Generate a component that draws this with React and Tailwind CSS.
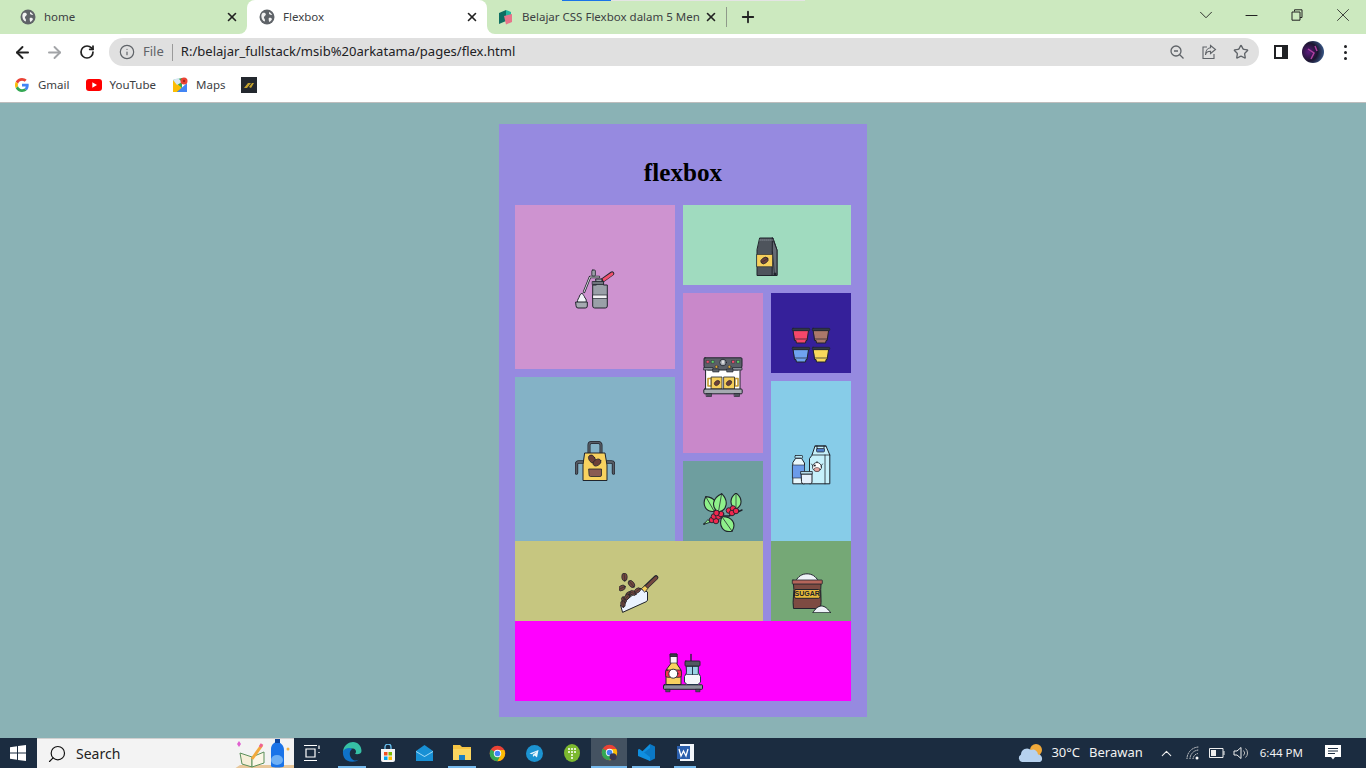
import React from "react";
import { ArrowLeft, ArrowRight, RotateCw, Info, Star, X, Plus, ChevronDown, Minus, ChevronUp, Search } from "lucide-react";

const K = "#20242c";
const Svg = ({ children, size = 40, box = 40 }) => (
  <svg width={size} height={size} viewBox={`0 0 ${box} ${box}`} className="block shrink-0" strokeLinejoin="round" strokeLinecap="round">{children}</svg>
);

const Whipper = () => (
  <Svg>
    <path d="M24 8H15L9 23" fill="none" stroke={K} strokeWidth="2.400" />
    <path d="M24 8H15L9 23" fill="none" stroke="#d5d8dc" strokeWidth="1" />
    <rect x="16.800" y="1" width="3.600" height="6" rx="1" fill="#9aa0a8" stroke={K} strokeWidth=".8" />
    <path d="M28 11L37 4.500" stroke={K} strokeWidth="4.400" />
    <path d="M29 10.500L37 4.800" stroke="#f2506d" strokeWidth="2.800" />
    <path d="M21 10h6v3h1.500v3H32.300v21a2 2 0 0 1-2 2H19.700a2 2 0 0 1-2-2V16h3.300z" fill="#9aa0a8" stroke={K} strokeWidth="1" />
    <rect x="17.600" y="12.500" width="11" height="3" fill="#6f757d" stroke={K} strokeWidth=".8" />
    <rect x="18" y="26" width="14" height="3.500" fill="#f3f3f5" stroke={K} strokeWidth=".7" />
    <path d="M2.500 33.500C2 30 4 29.500 4.500 27 5 25 7 24 7.500 24.500 8 26 9.500 27 10 29 11.500 30 11.500 32 11 33.500z" fill="#f1f4f8" stroke={K} strokeWidth="1" />
    <path d="M1 33h11.300v4a2 2 0 0 1-2 2H3a2 2 0 0 1-2-2z" fill="#a5aab1" stroke={K} strokeWidth="1" />
  </Svg>
);

const Bag = () => (
  <Svg>
    <path d="M13 1H26L30 13V38.500H10V13z" fill="#4e545c" stroke={K} strokeWidth="1" />
    <path d="M25.500 1L30 13V38.500H25.500z" fill="#666c75" stroke={K} strokeWidth="1" />
    <path d="M25.500 15L27.500 38" stroke={K} strokeWidth=".7" fill="none" />
    <path d="M13 3H26" stroke="#8a9099" strokeWidth=".9" strokeDasharray="1 1" />
    <rect x="10" y="17.500" width="15.500" height="12.200" fill="#f6cf5b" stroke={K} strokeWidth=".6" />
    <ellipse cx="17.500" cy="23.500" rx="4" ry="2.800" transform="rotate(-35 17.500 23.500)" fill="#6d4038" stroke={K} strokeWidth=".7" />
    <path d="M14.500 25.500L20.500 21.500" stroke={K} strokeWidth=".5" />
    <circle cx="28" cy="37" r="1.500" fill={K} />
  </Svg>
);

const Machine = () => (
  <Svg>
    <rect x="3" y="12" width="34" height="21" fill="#fff" stroke={K} strokeWidth="1" />
    <path d="M2 .800H38a1 1 0 0 1 1 1V9a4 4 0 0 1-4 4H5a4 4 0 0 1-4-4V1.800a1 1 0 0 1 1-1z" fill="#5b6068" stroke={K} strokeWidth="1" />
    <rect x="3.500" y="3.500" width="2.600" height="2.600" fill="#f2506d" stroke={K} strokeWidth=".4" />
    <rect x="8.500" y="3.500" width="2.600" height="2.600" fill="#5fd068" stroke={K} strokeWidth=".4" />
    <rect x="29" y="3.500" width="2.600" height="2.600" fill="#f2506d" stroke={K} strokeWidth=".4" />
    <rect x="34" y="3.500" width="2.600" height="2.600" fill="#5fd068" stroke={K} strokeWidth=".4" />
    <circle cx="20" cy="5.500" r="3.300" fill="#a7acb3" stroke={K} strokeWidth=".9" />
    <rect x="19.300" y="3.500" width="1.400" height="3" fill="#f2f2f2" />
    <circle cx="13.500" cy="9.800" r="1.500" fill="#e0a93a" stroke={K} strokeWidth=".5" />
    <circle cx="26.500" cy="9.800" r="1.500" fill="#e0a93a" stroke={K} strokeWidth=".5" />
    <rect x="1" y="10.500" width="9" height="2.500" fill="#8a9099" stroke={K} strokeWidth=".7" />
    <rect x="30" y="10.500" width="9" height="2.500" fill="#8a9099" stroke={K} strokeWidth=".7" />
    <rect x="10" y="12" width="6" height="3" fill="#5b6068" stroke={K} strokeWidth=".6" />
    <rect x="24" y="12" width="6" height="3" fill="#5b6068" stroke={K} strokeWidth=".6" />
    <path d="M5 21.500H8.500V29H5z M35 21.500H32V29H35z" fill="none" stroke="#c49a2e" strokeWidth="1.600" />
    <rect x="8.500" y="20" width="10.500" height="12" fill="#f6cf5b" stroke={K} strokeWidth=".8" />
    <rect x="21" y="20" width="10.500" height="12" fill="#f6cf5b" stroke={K} strokeWidth=".8" />
    <ellipse cx="14" cy="26" rx="3" ry="2.200" transform="rotate(-40 14 26)" fill="#6d4038" stroke={K} strokeWidth=".5" />
    <ellipse cx="26" cy="26" rx="3" ry="2.200" transform="rotate(-40 26 26)" fill="#6d4038" stroke={K} strokeWidth=".5" />
    <rect x=".800" y="32" width="38.400" height="4.800" rx="1" fill="#a5aab1" stroke={K} strokeWidth="1" />
    <rect x="3.500" y="36.500" width="5" height="3" fill="#4e545c" stroke={K} strokeWidth=".6" />
    <rect x="31.500" y="36.500" width="5" height="3" fill="#4e545c" stroke={K} strokeWidth=".6" />
  </Svg>
);

const Cup = ({ x, y, c }) => (
  <g transform={`translate(${x} ${y})`}>
    <path d="M1.200 3H16.300L14.800 13H13.800L13.300 15.500H4.200L3.700 13H2.700z" fill={c} stroke={K} strokeWidth="1" />
    <path d="M2.800 11.500H14.800" stroke={K} strokeWidth=".7" />
    <rect x="0" y=".8" width="17.500" height="2.400" rx=".8" fill="#333a44" stroke={K} strokeWidth=".7" />
  </g>
);
const Cups = () => (
  <Svg>
    <Cup x={1.200} y={2.500} c="#f4476a" />
    <Cup x={21.300} y={2.500} c="#a9786a" />
    <Cup x={1.200} y={21.500} c="#6fa3ef" />
    <Cup x={21.300} y={21.500} c="#f8d85c" />
  </Svg>
);

const Milk = () => (
  <Svg>
    <path d="M21 10L24 1H35L38.800 10V38.800H18.500V14z" fill="#c6f0fb" stroke={K} strokeWidth="1" />
    <path d="M34 10V38.800M21 10H38.800" stroke={K} strokeWidth=".8" fill="none" />
    <path d="M24 1H35M26 1V5H33V1" stroke={K} strokeWidth=".9" fill="none" />
    <rect x="25.500" y="3.500" width="8" height="3.500" rx="1" fill="#4e7cc7" stroke={K} strokeWidth=".7" />
    <circle cx="26" cy="22" r="4.500" fill="#fff" stroke={K} strokeWidth=".8" />
    <ellipse cx="26" cy="24.500" rx="3" ry="2" fill="#e8a9a2" stroke={K} strokeWidth=".5" />
    <path d="M20.500 19L22 21M31.500 19L30 21M26 16.500V17.500" stroke={K} strokeWidth=".8" />
    <circle cx="23.800" cy="20.500" r="1" fill={K} />
    <rect x="4" y="10.500" width="7.500" height="2.800" rx=".6" fill="#b8e6f6" stroke={K} strokeWidth=".8" />
    <path d="M5 13.300H10.500L13.500 18V38.800H1.800V18z" fill="#e9f8fd" stroke={K} strokeWidth="1" />
    <rect x="1.800" y="20" width="11.700" height="13" fill="#6b9bea" stroke={K} strokeWidth=".6" />
    <path d="M10.500 29H21V37a1.800 1.800 0 0 1-1.800 1.800H12.300A1.800 1.800 0 0 1 10.500 37z" fill="#e6f0fb" stroke={K} strokeWidth="1" />
    <rect x="10" y="26.500" width="11.300" height="2.500" fill="#b7dbe9" stroke={K} strokeWidth=".8" />
  </Svg>
);

const Apron = () => (
  <Svg>
    <path d="M14 13V4a2.500 2.500 0 0 1 2.500-2.500h7A2.500 2.500 0 0 1 26 4V13" fill="none" stroke={K} strokeWidth="3" />
    <path d="M14 13V4a2.500 2.500 0 0 1 2.500-2.500h7A2.500 2.500 0 0 1 26 4V13" fill="none" stroke="#575d66" strokeWidth="1.500" />
    <path d="M1.500 32V23a2 2 0 0 1 2-2H9M38.500 32V23a2 2 0 0 0-2-2H31" fill="none" stroke={K} strokeWidth="3.400" />
    <path d="M1.500 32V23a2 2 0 0 1 2-2H9M38.500 32V23a2 2 0 0 0-2-2H31" fill="none" stroke="#575d66" strokeWidth="1.800" />
    <path d="M10 12H30L32 24V39.500H8V24z" fill="#f8d25f" stroke={K} strokeWidth="1" />
    <path d="M14 28H26.500V34a1.500 1.500 0 0 1-1.500 1.500H15.500A1.500 1.500 0 0 1 14 34z" fill="#8a5a52" stroke={K} strokeWidth=".8" />
    <ellipse cx="17" cy="18" rx="3" ry="4.300" transform="rotate(-30 17 18)" fill="#6d4038" stroke={K} strokeWidth=".7" />
    <ellipse cx="22" cy="21.500" rx="4.300" ry="3" transform="rotate(-30 22 21.500)" fill="#6d4038" stroke={K} strokeWidth=".7" />
  </Svg>
);

const Leaf = ({ cx, cy, rx, ry, r }) => (
  <g transform={`rotate(${r} ${cx} ${cy})`}>
    <path d={`M${cx} ${cy - ry}C${cx + rx * 1.400} ${cy - ry * .4} ${cx + rx * 1.400} ${cy + ry * .6} ${cx} ${cy + ry}C${cx - rx * 1.400} ${cy + ry * .6} ${cx - rx * 1.400} ${cy - ry * .4} ${cx} ${cy - ry}z`} fill="#8ef08a" stroke={K} strokeWidth="1.100" />
    <path d={`M${cx} ${cy - ry}V${cy + ry}`} stroke={K} strokeWidth=".7" />
  </g>
);
const Berry = ({ x, y }) => <circle cx={x} cy={y} r="2.800" fill="#f0284f" stroke={K} strokeWidth=".9" />;
const Plant = () => (
  <Svg>
    <path d="M1 31L14 23H26L39 17" stroke={K} strokeWidth="1.500" fill="none" />
    <Leaf cx={7} cy={11} rx={5.500} ry={8.500} r={-30} />
    <Leaf cx={17} cy={10} rx={6} ry={9.500} r={10} />
    <Leaf cx={33} cy={8} rx={4.800} ry={8} r={0} />
    <Leaf cx={24} cy={31} rx={6} ry={8.800} r={-35} />
    <path d="M1 31L5 26.500 7 29z" fill="#8ef08a" stroke={K} strokeWidth=".8" />
    <Berry x={9} y={27} /><Berry x={13} y={28} /><Berry x={11} y={23.500} /><Berry x={15.500} y={23.500} /><Berry x={18} y={21} /><Berry x={13.500} y={20} />
    <Berry x={26} y={17.500} /><Berry x={30} y={15.500} /><Berry x={29} y={20} /><Berry x={33} y={18} />
  </Svg>
);

const CBean = ({ x, y, r, a = 3.400, b = 2.200 }) => (
  <g transform={`rotate(${r} ${x} ${y})`}>
    <ellipse cx={x} cy={y} rx={a} ry={b} fill="#74483f" stroke={K} strokeWidth=".7" />
    <path d={`M${x - a} ${y}H${x + a}`} stroke={K} strokeWidth=".5" />
  </g>
);
const Scoop = () => (
  <Svg>
    <path d="M27 14L37 4.500" stroke={K} strokeWidth="4.600" />
    <path d="M28 13.500L37 4.800" stroke="#74483f" strokeWidth="3" />
    <CBean x={5.500} y={4} r={85} a={4} b={2.700} />
    <CBean x={12.500} y={11} r={50} a={4} b={2.600} />
    <CBean x={2.900} y={15} r={-25} a={3.600} b={2.500} />
    <path d="M3.500 39L1.500 32 21.500 15.500 28.500 19V27a2 2 0 0 1-1 1.500z" fill="#eaf3ff" stroke={K} strokeWidth="1" />
    <CBean x={10} y={21} r={-30} /><CBean x={14} y={20} r={20} /><CBean x={18.500} y={17.500} r={-35} />
    <CBean x={5} y={27} r={70} /><CBean x={8} y={24} r={-50} /><CBean x={4} y={31} r={80} />
    <path d="M22.500 15.500L26 12.500 28.800 15.500 26 19z" fill="#f6cf5b" stroke={K} strokeWidth=".8" />
  </Svg>
);

const Sugar = () => (
  <Svg>
    <path d="M5 7.500C7 3.500 11 .8 16 .8S25 3.500 27 7.500z" fill="#eef2f8" stroke={K} strokeWidth="1" />
    <path d="M2.500 11C4 18 1 28 2.500 35.500H29.500C31 28 29 18 30 11z" fill="#7d4b42" stroke={K} strokeWidth="1" />
    <rect x="1.300" y="7" width="30" height="4" rx=".6" fill="#b5655a" stroke={K} strokeWidth=".8" />
    <rect x="3.500" y="16.500" width="25.500" height="8.800" rx="1.500" fill="#e8b93a" stroke={K} strokeWidth="1" />
    <text x="16.200" y="23.300" textAnchor="middle" fontFamily="Liberation Sans, sans-serif" fontWeight="700" fontSize="7" fill={K}>SUGAR</text>
    <path d="M22 39.500C24 36 27 33 30.500 33S37 36 39.500 39.500z" fill="#eef2f8" stroke={K} strokeWidth="1" />
  </Svg>
);

const Bottles = () => (
  <Svg>
    <rect x=".5" y="31.800" width="39" height="4.500" rx=".8" fill="#8a9099" stroke={K} strokeWidth="1" />
    <rect x="3" y="36.300" width="4" height="2.500" fill="#4e545c" stroke={K} strokeWidth=".6" />
    <rect x="33" y="36.300" width="4" height="2.500" fill="#4e545c" stroke={K} strokeWidth=".6" />
    <path d="M7.500 1H14V11L18 17V31.500H3V17L7.500 11z" fill="#f8d25f" stroke={K} strokeWidth="1" />
    <path d="M7.500 3.500H14V10H7.500z" fill="#f7f7f7" stroke={K} strokeWidth=".6" />
    <rect x="7.500" y="1" width="6.500" height="2.500" fill="#3b3f47" stroke={K} strokeWidth=".7" />
    <rect x="2.500" y="17" width="16" height="7.300" rx="2" fill="#f2344f" stroke={K} strokeWidth=".8" />
    <circle cx="10.300" cy="20.700" r="4.500" fill="#fff" stroke={K} strokeWidth=".9" />
    <path d="M28 1.500V8" stroke={K} strokeWidth="1.300" />
    <path d="M23.500 13H35.500V20L37.500 23.500V29L35 31.500H24L21.500 29V23.500L23.500 20z" fill="#f4f7fa" stroke="#213449" strokeWidth="1" />
    <path d="M23.800 13.500H35.200V21.500H23.800z" fill="#9bd3e6" stroke="#213449" strokeWidth=".7" />
    <path d="M29.500 13.500V21.500" stroke="#213449" strokeWidth="1" />
    <rect x="22" y="8" width="15" height="5" rx=".8" fill="#535962" stroke={K} strokeWidth=".9" />
  </Svg>
);

const Cell = ({ className, tall, children }) => (
  <div className={`flex flex-col items-center ${tall ? "pt-16" : "pt-8"} ${className}`}>{children}</div>
);

const Globe = () => (
  <svg width="16" height="16" viewBox="0 0 16 16" className="shrink-0">
    <circle cx="8" cy="8" r="7.500" fill="#5f6368" />
    <path d="M3.500 4C5 3.500 6.300 3.800 6.800 5S5.500 7 5 8 6 10 6 11 5.500 12.500 5.500 12.500 3 11.500 2.500 8.500 2.800 5 3.500 4zM10 3C11.500 3.500 12.500 4.500 13.200 6L11.500 5.800 10 5zM9.800 9C11 8.600 12.500 9 13 10 12.500 11.300 11.500 12.300 10.300 13 9.800 11.800 9.500 10.200 9.800 9z" fill="#f1f1f1" />
  </svg>
);

const Tab = ({ active, icon, title, w, pl }) => (
  <div className={`relative flex items-center h-[34px] pr-2 gap-2 ${pl} ${w} ${active ? "bg-white rounded-t-lg" : ""}`}>
    {active && (
      <div className="absolute -left-2 bottom-0 w-2 h-2 bg-white">
        <div className="w-2 h-2 bg-[#cce9bf] rounded-br-lg" />
      </div>
    )}
    {active && (
      <div className="absolute -right-2 bottom-0 w-2 h-2 bg-white">
        <div className="w-2 h-2 bg-[#cce9bf] rounded-bl-lg" />
      </div>
    )}
    {icon}
    <span className="flex-1 min-w-0 whitespace-nowrap text-[11.500px] text-[#3c4043]">{title}</span>
    <X size={14} strokeWidth={2.800} color="#222" className="shrink-0" />
  </div>
);

const ReadingLogo = () => (
  <svg width="16" height="16" viewBox="0 0 16 16" className="shrink-0">
    <path d="M1 4L8 1V12L1 15z" fill="#0f6e62" />
    <path d="M8 1L13 3V9L8 12z" fill="#27b6a0" />
    <path d="M6 7L14 5V13L8 15.500z" fill="#e8748a" />
  </svg>
);

const GoogleG = () => (
  <svg width="14" height="14" viewBox="0 0 48 48" className="shrink-0">
    <path fill="#EA4335" d="M24 9.500c3.500 0 6.700 1.300 9.100 3.500l6.800-6.800C35.800 2.400 30.300 0 24 0 14.600 0 6.500 5.400 2.600 13.200l7.900 6.100C12.400 13.600 17.700 9.500 24 9.500z" />
    <path fill="#4285F4" d="M47 24.500c0-1.600-.1-3.100-.4-4.500H24v9h12.900c-.6 3-2.200 5.500-4.800 7.200l7.700 6C44.300 38 47 31.800 47 24.500z" />
    <path fill="#FBBC05" d="M10.500 28.700C10 27.200 9.800 25.600 9.800 24s.3-3.200.7-4.700l-7.900-6.100C.9 16.500 0 20.100 0 24s.9 7.500 2.600 10.800z" />
    <path fill="#34A853" d="M24 48c6.500 0 11.900-2.100 15.800-5.800l-7.700-6c-2.100 1.400-4.900 2.300-8.100 2.300-6.300 0-11.600-4.100-13.500-9.800l-7.900 6.100C6.500 42.600 14.600 48 24 48z" />
  </svg>
);

const Chrome = ({ s = 20, dark }) => (
  <svg width={s} height={s} viewBox="0 0 24 24" className="shrink-0">
    <circle cx="12" cy="12" r="11" fill="#ea4335" />
    <path d="M12 12L2.500 6.500A11 11 0 0 0 12 23L17.500 13.500z" fill="#34a853" />
    <path d="M12 7H21.500A11 11 0 0 1 12 23L17 13z" fill="#fbbc05" />
    <circle cx="12" cy="12" r="5.200" fill="#fff" />
    <circle cx="12" cy="12" r="4" fill="#4285f4" />
    {dark && <circle cx="17" cy="18" r="5" fill="#3a3550" />}
  </svg>
);

export default function App() {
  return (
    <div className="relative flex flex-col h-screen overflow-hidden bg-[#8ab2b5]" style={{ fontFamily: '"Noto Sans", sans-serif' }}>
      {/* tab strip */}
      <div className="relative flex items-center h-[34px] bg-[#cce9bf] shrink-0">
        <Tab w="w-[247px]" pl="pl-5" title="home" icon={<Globe />} />
        <Tab active w="w-[240px]" pl="pl-3" title="Flexbox" icon={<Globe />} />
        <Tab w="w-[239px]" pl="pl-[11px]" title="Belajar CSS Flexbox dalam 5 Men" icon={<ReadingLogo />} />
        <div className="w-px h-5 bg-[#8f9a8a]" />
        <Plus size={18} strokeWidth={2.400} color="#222" className="ml-[12px]" />
        <div className="flex-1" />
        <ChevronDown size={22} strokeWidth={1} color="#222" className="mr-[25px] mb-1" />
        <Minus size={19} strokeWidth={1.300} color="#222" className="mr-[30px] mb-1" />
        <svg width="12" height="12" viewBox="0 0 12 12" className="mr-[29px] mb-1">
          <path d="M3.500 2.500V.8H11V8.500H9M1 3H9V11.200H1z" fill="none" stroke="#222" strokeWidth="1" />
        </svg>
        <X size={22} strokeWidth={.9} color="#222" className="mr-3 mb-1" />
        <div className="absolute left-[562px] top-0 w-[49px] h-px bg-[#1a73e8]" />
        <div className="absolute left-[611px] top-0 w-[194px] h-px bg-[#e4e4e4]" />
      </div>

      {/* toolbar */}
      <div className="flex items-center h-9 bg-white shrink-0">
        <ArrowLeft size={19} strokeWidth={2.400} color="#222" className="ml-[13px]" />
        <ArrowRight size={19} strokeWidth={2.400} color="#a2a4a7" className="ml-[13px]" />
        <RotateCw size={16} strokeWidth={2.600} color="#222" className="ml-[15px]" />
        <div className="flex items-center h-7 w-[1150px] ml-[14px] rounded-full bg-[#e0e0e0]">
          <Info size={16} strokeWidth={1.800} color="#5f6368" className="ml-[10px]" />
          <span className="ml-2 text-[13px] text-[#5f6368]">File</span>
          <div className="w-px h-[17px] ml-[8px] bg-[#9a9a9a]" />
          <span className="ml-[8px] text-[13.050px] text-[#202124] whitespace-nowrap">R:/belajar_fullstack/msib%20arkatama/pages/flex.html</span>
          <div className="flex-1" />
          <svg width="16" height="16" viewBox="0 0 16 16" className="mr-[16px]">
            <circle cx="7" cy="7" r="5" fill="none" stroke="#5f6368" strokeWidth="1.300" />
            <path d="M5 7H9M10.500 10.500L14.500 14.500" stroke="#5f6368" strokeWidth="1.300" />
          </svg>
          <svg width="16" height="16" viewBox="0 0 16 16" className="mr-[16px]">
            <path d="M6 3H2V14.500H13V10" fill="none" stroke="#5f6368" strokeWidth="1.100" />
            <path d="M9.500 1.500L14.500 5.500 9.500 9.500V7.300C7 7.300 5 8.500 4.500 11 4.500 7 6.500 4 9.500 3.800z" fill="none" stroke="#5f6368" strokeWidth="1.100" />
          </svg>
          <Star size={16} strokeWidth={2} color="#5f6368" className="mr-[10px]" />
        </div>
        <svg width="14" height="14" viewBox="0 0 14 14" className="ml-[15px]">
          <path d="M0 0H14V14H0z" fill="#202124" />
          <path d="M2 2H8V12H2z" fill="#fff" />
        </svg>
        <svg width="22" height="22" viewBox="0 0 22 22" className="ml-[14px]">
          <defs>
            <radialGradient id="av" cx=".3" cy=".5" r=".9">
              <stop offset="0" stopColor="#5b1a7c" />
              <stop offset=".45" stopColor="#1c1530" />
              <stop offset=".8" stopColor="#3a5c8c" />
              <stop offset="1" stopColor="#58c3d8" />
            </radialGradient>
          </defs>
          <circle cx="11" cy="11" r="11" fill="url(#av)" />
          <path d="M6 8L12 12 9 18M13 5L15 10" stroke="#b03fa0" strokeWidth="1.500" fill="none" />
        </svg>
        <div className="flex flex-col gap-[3px] ml-[20px]">
          <div className="w-[3px] h-[3px] rounded-full bg-[#202124]" />
          <div className="w-[3px] h-[3px] rounded-full bg-[#202124]" />
          <div className="w-[3px] h-[3px] rounded-full bg-[#202124]" />
        </div>
      </div>

      {/* bookmarks */}
      <div className="flex items-center h-[33px] pl-[15px] pb-[2px] bg-white border-b border-[#bdbdbd] shrink-0 text-[11.500px] text-[#3c4043]">
        <GoogleG />
        <span className="ml-[9px]">Gmail</span>
        <svg width="16" height="12" viewBox="0 0 16 12" className="ml-[16px]">
          <rect width="16" height="12" rx="3" fill="#f00" />
          <path d="M6.300 3.300L11 6 6.300 8.700z" fill="#fff" />
        </svg>
        <span className="ml-[8px]">YouTube</span>
        <svg width="16" height="16" viewBox="0 0 16 16" className="ml-[16px]">
          <path d="M1 3L10 1V15L1 15z" fill="#34a853" />
          <path d="M1 3L10 11 5 15H1z" fill="#fbbc05" />
          <path d="M5 15L15 6V15z" fill="#4285f4" />
          <path d="M1 3L6 1 10 5 5 8z" fill="#d6e6f5" />
          <circle cx="12" cy="4" r="3.500" fill="#ea4335" />
          <circle cx="12" cy="4" r="1.200" fill="#a52714" />
        </svg>
        <span className="ml-[8px]">Maps</span>
        <svg width="16" height="16" viewBox="0 0 16 16" className="ml-[16px]">
          <rect width="16" height="16" fill="#23282e" />
          <path d="M3 11L7 6H10L6 11zM8 10L11 6H13L10 11z" fill="#c4a32d" />
        </svg>
      </div>

      {/* page */}
      <main className="flex-1 min-h-0 flex items-center justify-center">
        <div className="w-[368px] h-[593px] p-4 bg-[#968ae0]">
          <h1 className="flex items-center justify-center h-[65px] text-[25.200px] font-bold text-black" style={{ fontFamily: '"Liberation Serif", serif' }}>flexbox</h1>
          <div className="flex gap-2 h-[336px]">
            <div className="flex flex-col gap-2 w-40">
              <Cell tall className="flex-1 bg-[#ce93d0]"><Whipper /></Cell>
              <Cell tall className="flex-1 bg-[#84b2c6]"><Apron /></Cell>
            </div>
            <div className="flex flex-col gap-2 w-[168px]">
              <Cell className="h-20 bg-[#a0dbbf]"><Bag /></Cell>
              <div className="flex gap-2 flex-1">
                <div className="flex flex-col gap-2 w-20">
                  <Cell tall className="h-40 bg-[#c988ca]"><Machine /></Cell>
                  <Cell className="h-20 bg-[#6e9e9f]"><Plant /></Cell>
                </div>
                <div className="flex flex-col gap-2 w-20">
                  <Cell className="h-20 bg-[#35209a]"><Cups /></Cell>
                  <Cell tall className="h-40 bg-[#87cce8]"><Milk /></Cell>
                </div>
              </div>
            </div>
          </div>
          <div className="flex gap-2">
            <Cell className="h-20 w-[248px] bg-[#c6c680]"><Scoop /></Cell>
            <Cell className="h-20 w-20 bg-[#75a876]"><Sugar /></Cell>
          </div>
          <Cell className="h-20 bg-[#ff00ff]"><Bottles /></Cell>
        </div>
      </main>

      {/* taskbar */}
      <div className="flex items-center h-[30px] bg-[#1b2c40] shrink-0 text-white">
        <svg width="16" height="16" viewBox="0 0 16 16" className="ml-[10px]">
          <path d="M0 2.300L7 1.300V7.500H0zM8 1.100L16 0V7.500H8zM0 8.500H7V14.700L0 13.700zM8 8.500H16V16L8 14.900z" fill="#fff" />
        </svg>
        <div className="flex items-center relative w-[257px] h-[30px] ml-[11px] bg-[#f3f3f3] border-t border-[#d0d0d0]">
          <Search size={20} strokeWidth={1.400} color="#111" className="ml-[10px] -scale-x-100" />
          <span className="ml-[9px] text-[14px] text-[#222]">Search</span>
          <svg width="60" height="30" viewBox="0 0 60 30" className="absolute right-0 top-0">
            <path d="M0 30L6 26H60V30z" fill="#e8c79a" />
            <path d="M6 14L18 18V28L8 25z" fill="#f6efd9" stroke="#5b8f5a" strokeWidth="1" />
            <path d="M18 18L30 13V24L18 28z" fill="#fbf6e6" stroke="#5b8f5a" strokeWidth="1" />
            <path d="M18 20L28 6" stroke="#f2a93b" strokeWidth="3" />
            <path d="M26 8L28 5" stroke="#f06292" strokeWidth="3" />
            <path d="M37 10C37 6 40 3 43 3S50 6 50 11V27C50 29 37 29 37 27z" fill="#1a73e8" />
            <ellipse cx="43" cy="21" rx="6" ry="5" fill="#6fb0f5" />
            <rect x="41" y="0" width="5" height="4" fill="#0d47a1" />
            <path d="M3 5L5 2 7 5 5 8z" fill="#e05fd0" />
            <circle cx="54" cy="10" r="1.500" fill="#f5b342" />
          </svg>
        </div>

        <div className="flex items-center h-[30px] ml-[9px]">
          <svg width="18" height="18" viewBox="0 0 18 18" className="shrink-0">
            <path d="M1 1.500H14M1 16.500H14M3 5H12V13H3z M16 1.500V5M16 8V9" stroke="#fff" strokeWidth="1.200" fill="none" />
          </svg>
          <div className="relative flex justify-center items-center w-7 h-[30px] ml-[17px] border-b-2 border-[#76b9ed]">
            <svg width="20" height="20" viewBox="0 0 20 20">
              <path d="M1 9C2 3 7 0 11 0 16 0 19.500 4 19.500 9 19.500 12 16 12.500 13 12 15 10 14 7 11 6.500 6 6 3 9 1 9z" fill="#36c0a5" />
              <path d="M1 9C3 6 8 5 10 7 7 9 7 14 10 17 12 19 15 19 17 17.500 14 20 9 20.500 5 18.500 2 17 .5 13 1 9z" fill="#0f72c8" />
            </svg>
          </div>
          <div className="flex justify-center w-[18px] ml-[13px]">
            <svg width="16" height="18" viewBox="0 0 16 18">
              <path d="M1 5H15V16A2 2 0 0 1 13 18H3A2 2 0 0 1 1 16z" fill="#f5f5f5" />
              <path d="M5 5V3A3 3 0 0 1 11 3V5" fill="none" stroke="#67c0f0" strokeWidth="1.300" />
              <path d="M4 8H7.500V11.500H4z" fill="#f25022" /><path d="M8.500 8H12V11.500H8.500z" fill="#7fba00" /><path d="M4 12.500H7.500V16H4z" fill="#00a4ef" /><path d="M8.500 12.500H12V16H8.500z" fill="#ffb900" />
            </svg>
          </div>
          <div className="flex justify-center w-[18px] ml-[18px]">
            <svg width="17" height="16" viewBox="0 0 17 16">
              <path d="M0 6L8.500 0 17 6V16H0z" fill="#1890d5" />
              <path d="M0 6L8.500 11 17 6V7L8.500 12 0 7z" fill="#a5dcf7" />
            </svg>
          </div>
          <div className="flex justify-center items-center w-7 h-[30px] ml-[15px] border-b-2 border-[#76b9ed]">
            <svg width="18" height="16" viewBox="0 0 18 16">
              <path d="M0 1H7L9 3H18V16H0z" fill="#f6c544" />
              <rect x="0" y="5" width="18" height="11" fill="#fbd660" />
              <path d="M6 11H12V16H6z" fill="#1b7fc4" />
            </svg>
          </div>
          <div className="flex justify-center w-[17px] ml-[13px]"><Chrome s={17} /></div>
          <div className="flex justify-center w-[17px] ml-[20px]">
            <svg width="17" height="17" viewBox="0 0 17 17">
              <circle cx="8.500" cy="8.500" r="8.500" fill="#1c93d1" />
              <path d="M3.500 8.500L12.500 5 11 12.500 8.500 10.500 7 12 6.800 9.700 11 6.500 5.800 9.200z" fill="#eaf6fc" />
            </svg>
          </div>
          <div className="flex justify-center w-[17px] ml-[20px]">
            <svg width="16" height="18" viewBox="0 0 16 18">
              <ellipse cx="8" cy="9" rx="8" ry="9" fill="#7cb82f" />
              <path d="M4 5H12M4 8H12M7 11H9M7 14H9" stroke="#fff" strokeWidth="1.600" strokeDasharray="2 1" />
            </svg>
          </div>
          <div className="flex justify-center items-center w-9 h-[30px] ml-[11px] bg-[#445261] border-b-2 border-[#76b9ed]"><Chrome s={17} dark /></div>
          <div className="flex justify-center items-center w-7 h-[30px] ml-[5px] border-b-2 border-[#76b9ed]">
            <svg width="17" height="17" viewBox="0 0 17 17">
              <path d="M12 0L17 2.500V14.500L12 17 3 9.500 12 3z" fill="#0b78c5" />
              <path d="M12 0V17L0 12V5.500L1.500 5 12 13V4L1.500 12 0 11.500" fill="#0f8fe0" />
            </svg>
          </div>
          <div className="flex justify-center items-center w-[22px] h-[30px] ml-[14px] border-b-2 border-[#76b9ed]">
            <svg width="17" height="17" viewBox="0 0 17 17">
              <rect x="3" y="0" width="14" height="17" fill="#f3f6fb" />
              <rect x="0" y="2" width="13" height="13" fill="#2b5fad" />
              <path d="M2 5L4 12 6.500 7 9 12 11 5" fill="none" stroke="#fff" strokeWidth="1.300" />
            </svg>
          </div>
        </div>

        <div className="flex-1" />
        <svg width="26" height="20" viewBox="0 0 26 20" className="mr-[7px] mb-[1px]">
          <circle cx="18" cy="7" r="6" fill="#f0a93a" />
          <path d="M4 19A4 4 0 0 1 3 11.500 6 6 0 0 1 13 7 5 5 0 0 1 20 11.500 4 4 0 0 1 22 19z" fill="#b6d1ee" />
        </svg>
        <span className="text-[13px] text-[#f2f2f2]">30°C</span>
        <span className="ml-[9px] text-[13px] text-[#f2f2f2]">Berawan</span>
        <ChevronUp size={17} strokeWidth={1.500} color="#eee" className="ml-[15px]" />
        <svg width="14" height="14" viewBox="0 0 14 14" className="ml-[11px]">
          <path d="M1 13A12 12 0 0 1 13 1M4 13A9 9 0 0 1 13 4M7 13A6 6 0 0 1 12 7.500" fill="none" stroke="#ddd" strokeWidth="1" strokeDasharray="1.500 .8" />
          <circle cx="11" cy="12" r="1.500" fill="#fff" />
        </svg>
        <svg width="16" height="10" viewBox="0 0 16 10" className="ml-[9px]">
          <path d="M.5 .5H14V9.500H.5z" fill="none" stroke="#eee" />
          <path d="M2 2H7V8H2z" fill="#eee" />
          <path d="M15 3V7" stroke="#eee" />
        </svg>
        <svg width="16" height="14" viewBox="0 0 16 14" className="ml-[8px]">
          <path d="M1 5H4L8 1.500V12.500L4 9H1z" fill="none" stroke="#eee" />
          <path d="M10.500 4.500A3.500 3.500 0 0 1 10.500 9.500M12.500 2.500A6 6 0 0 1 12.500 11.500" fill="none" stroke="#bbb" />
        </svg>
        <span className="ml-[11px] text-[11.500px] text-[#f2f2f2] whitespace-nowrap">6:44 PM</span>
        <svg width="16" height="16" viewBox="0 0 16 16" className="ml-[22px] mr-[25px]">
          <path d="M0 0H16V12H10L8 14.500 6 12H0z" fill="#fff" />
          <path d="M3 3.500H13M3 6H13M3 8.500H10" stroke="#1b2c40" strokeWidth="1" />
        </svg>
      </div>
    </div>
  );
}
